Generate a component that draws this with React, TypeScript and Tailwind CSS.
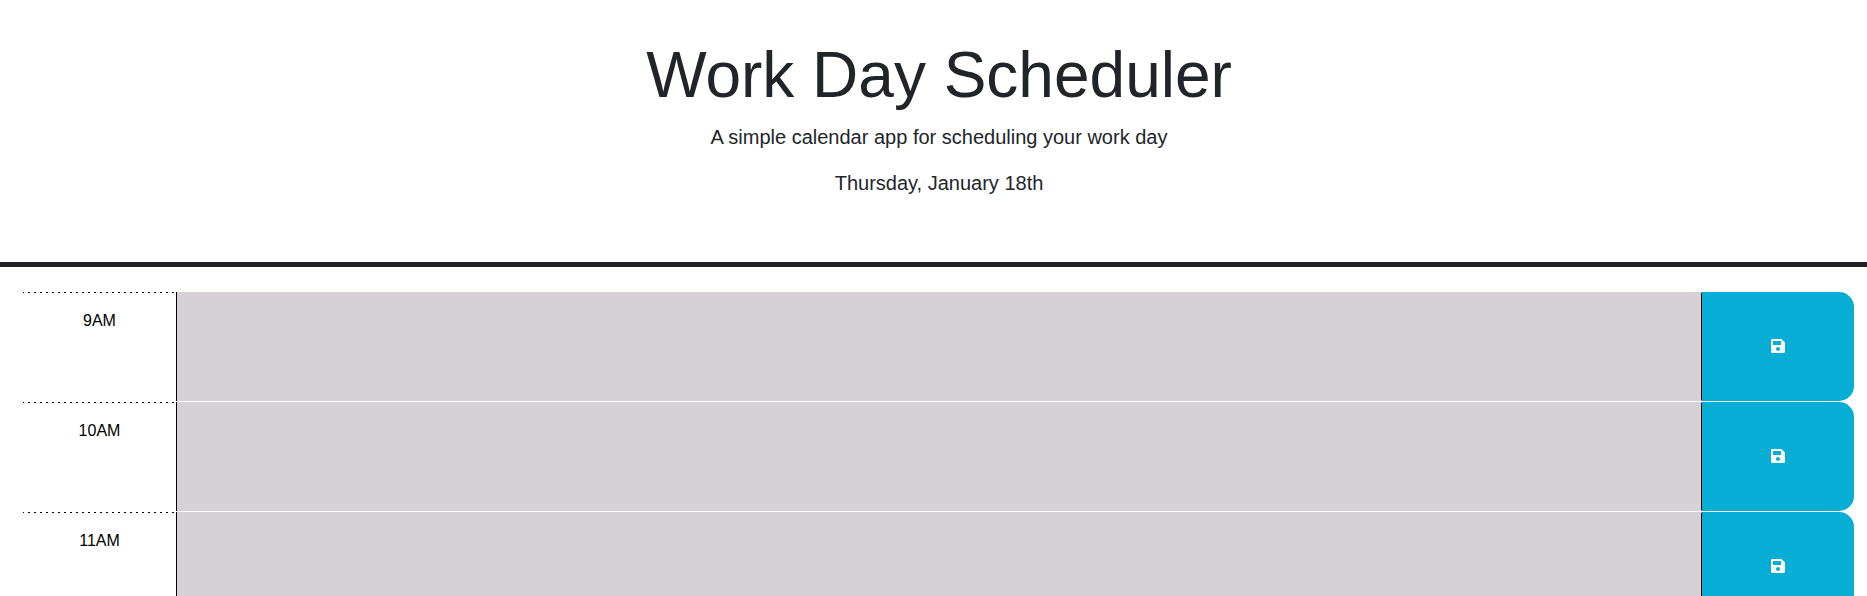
const hours = ["9AM", "10AM", "11AM"];

function SaveIcon() {
  return (
    <svg viewBox="0 0 448 512" className="h-4 w-[14px] fill-white" aria-hidden="true">
      <path d="M433.941 129.941l-83.882-83.882A48 48 0 0 0 316.118 32H48C21.49 32 0 53.49 0 80v352c0 26.51 21.49 48 48 48h352c26.51 0 48-21.49 48-48V163.882a48 48 0 0 0-14.059-33.941zM224 416c-35.346 0-64-28.654-64-64 0-35.346 28.654-64 64-64s64 28.654 64 64c0 35.346-28.654 64-64 64zm96-304.52V212c0 6.627-5.373 12-12 12H76c-6.627 0-12-5.373-12-12V108c0-6.627 5.373-12 12-12h228.52c3.183 0 6.235 1.264 8.485 3.515l3.48 3.48A11.996 11.996 0 0 1 320 111.48z" />
    </svg>
  );
}

export default function App() {
  return (
    <div className="h-[596px] overflow-hidden bg-white font-['Liberation_Sans',Arial,sans-serif] text-[#212529]">
      <header className="flex h-[267px] flex-col items-center border-b-5 border-[#222025] pl-[11px] pt-[37px] text-center">
        <h1 className="text-[64px] leading-[77px]">Work Day Scheduler</h1>
        <p className="mt-2 text-[20px] leading-[30px]">A simple calendar app for scheduling your work day</p>
        <p className="mt-4 text-[20px] leading-[30px]">Thursday, January 18th</p>
      </header>
      <main className="pl-[23px] pr-[13px] pt-[25px]">
        {hours.map((hour) => (
          <div key={hour} className="flex h-[110px]">
            <div className="w-[153px] bg-[repeating-linear-gradient(90deg,#000_0_1px,transparent_1px_5px,#000_5px_6px)] bg-[length:100%_1px] bg-no-repeat pt-[17px] text-center text-base text-black">{hour}</div>
            <textarea aria-label={hour} className="block h-[109px] flex-1 resize-none border-l border-black bg-[#d5d1d6]" />
            <button aria-label="Save" className="flex h-[109px] w-[153px] items-center justify-center rounded-l-[2px] rounded-r-[15px] border-l border-black bg-[#06aed5] pb-px">
              <SaveIcon />
            </button>
          </div>
        ))}
      </main>
    </div>
  );
}
